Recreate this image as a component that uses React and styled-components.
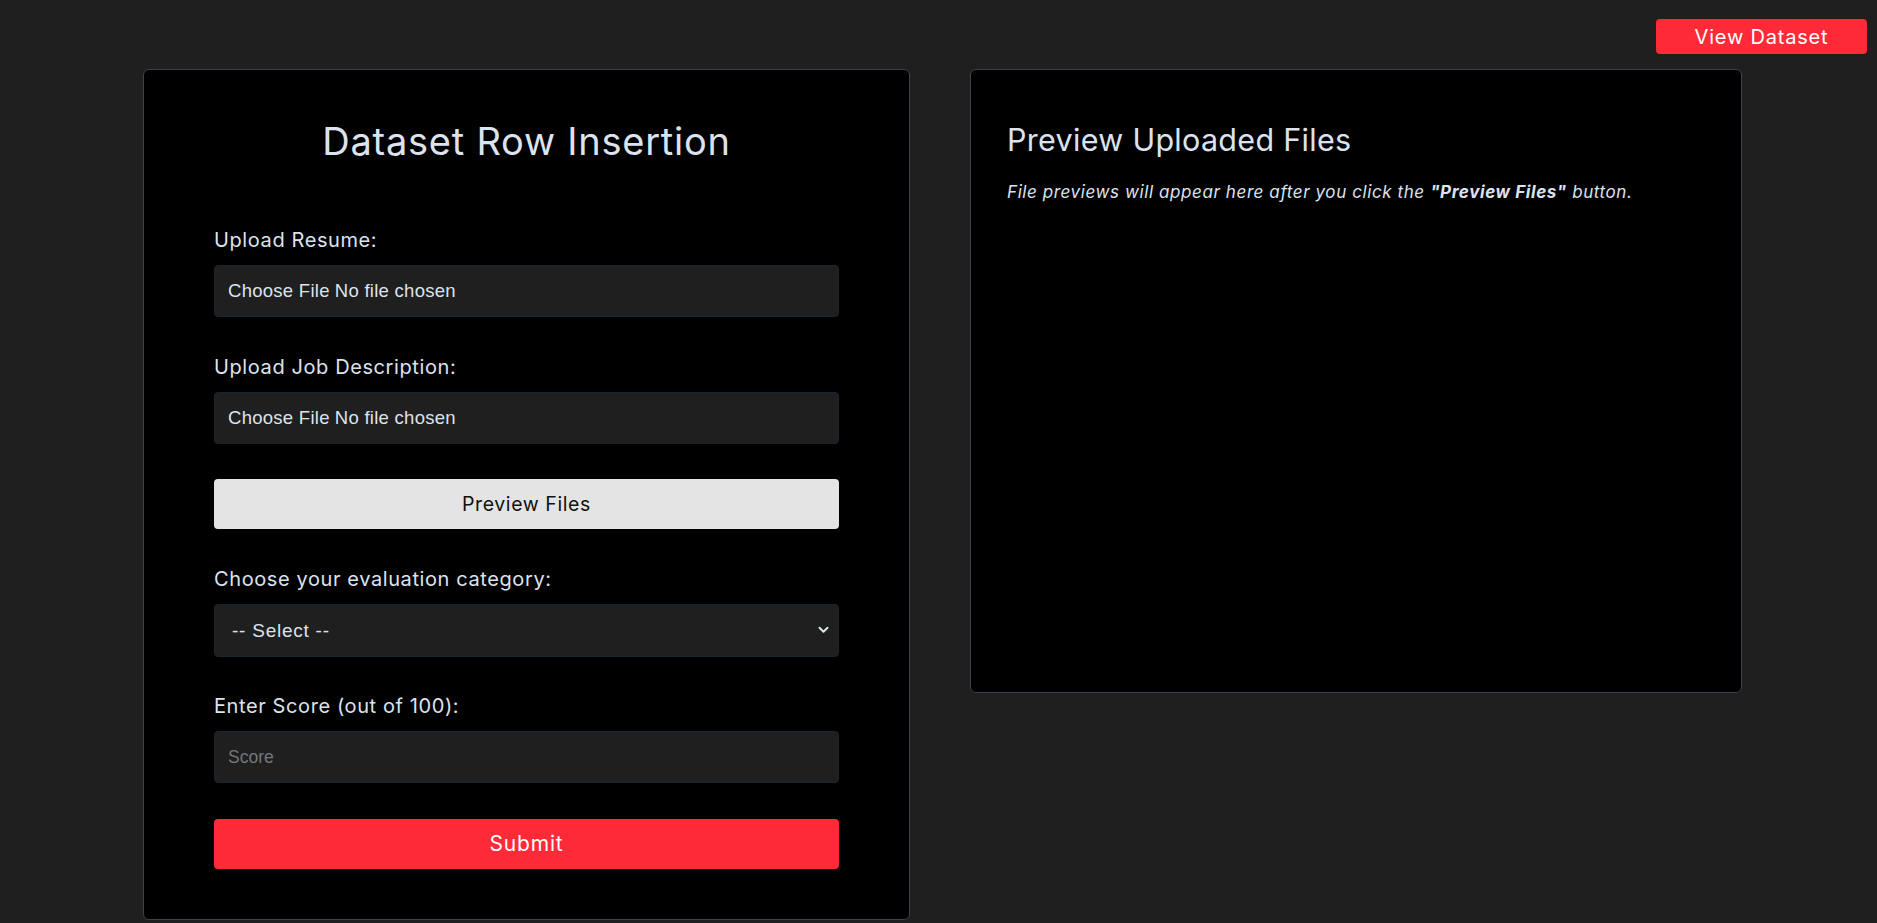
import React from "react";
import styled, { createGlobalStyle } from "styled-components";

const GlobalStyle = createGlobalStyle`
  * { box-sizing: border-box; }
  body {
    margin: 0;
    background: #1f1f1f;
    color: #dde3ee;
    font-family: "Inter", "Noto Sans", sans-serif;
  }
`;

const TopBar = styled.div`
  display: flex;
  justify-content: flex-end;
  padding: 19px 10px 0 0;
`;

const RedButton = styled.button`
  width: ${(p) => p.$width || "100%"};
  height: ${(p) => p.$height || "50px"};
  border: none;
  border-radius: 4px;
  background: #ff2a37;
  color: #ffffff;
  font-family: "Inter", "Noto Sans", sans-serif;
  font-size: ${(p) => p.$fontSize || "20px"};
  letter-spacing: 0.04em;
  cursor: pointer;
`;

const LightButton = styled.button`
  width: 100%;
  height: 50px;
  border: none;
  border-radius: 4px;
  background: #e4e4e4;
  color: #111111;
  font-family: "Inter", "Noto Sans", sans-serif;
  font-size: 19.5px;
  letter-spacing: 0.03em;
  cursor: pointer;
`;

const Main = styled.main`
  display: flex;
  align-items: flex-start;
  gap: 60px;
  padding: 15px 0 0 143px;
`;

const Card = styled.section`
  width: ${(p) => p.$width};
  min-height: ${(p) => p.$minHeight || "auto"};
  background: #000000;
  border: 1px solid #3d414a;
  border-radius: 6px;
  padding: ${(p) => p.$padding};
`;

const Title = styled.h2`
  margin: 0 0 63px;
  text-align: center;
  font-size: 38px;
  font-weight: 400;
  line-height: 43px;
  letter-spacing: 0.02em;
  color: #dde3ee;
`;

const Form = styled.form`
  display: flex;
  flex-direction: column;
  gap: 35.5px;
`;

const Field = styled.div`
  display: flex;
  flex-direction: column;
  gap: 11px;
`;

const Label = styled.label`
  font-size: 20px;
  line-height: 28px;
  letter-spacing: 0.03em;
  color: #dde3ee;
`;

const inputBase = `
  width: 100%;
  height: 52px;
  background: #1f1f1f;
  border: 1px solid #1c2433;
  border-radius: 4px;
  color: #dde3ee;
  font-family: "Liberation Sans", Arial, sans-serif;
  font-size: 17.5px;
  padding: 0 13px;
  outline: none;
`;

const FileInput = styled.input.attrs({ type: "file" })`
  ${inputBase}
  font-size: 18.5px;
  letter-spacing: 0.015em;
  line-height: 50px;

  &::file-selector-button {
    background: none;
    border: none;
    padding: 0;
    margin-right: 5px;
    color: #dde3ee;
    font: inherit;
    letter-spacing: inherit;
  }
`;

const TextInput = styled.input`
  ${inputBase}
  &::placeholder {
    color: #767676;
  }
`;

const SelectWrap = styled.div`
  position: relative;
`;

const Select = styled.select`
  ${inputBase}
  height: 53px;
  appearance: none;
  padding-left: 17px;
  font-size: 19px;
  letter-spacing: 0.04em;
`;

const Chevron = styled.svg`
  position: absolute;
  right: 10px;
  top: 22px;
  pointer-events: none;
`;

const PreviewHeading = styled.h3`
  margin: 0 0 22px;
  font-size: 30.5px;
  font-weight: 400;
  line-height: 36px;
  letter-spacing: 0.01em;
  color: #dde3ee;
`;

const Hint = styled.p`
  margin: 0;
  font-size: 17px;
  font-style: italic;
  line-height: 24px;
  letter-spacing: 0.035em;
  color: #dde3ee;

  strong {
    font-weight: 700;
  }
`;

export default function App() {
  return (
    <>
      <GlobalStyle />
      <TopBar>
        <RedButton $width="211px" $height="35px" $fontSize="20px">View Dataset</RedButton>
      </TopBar>
      <Main>
        <Card $width="767px" $padding="50px 70px 50px">
          <Title>Dataset Row Insertion</Title>
          <Form onSubmit={(e) => e.preventDefault()}>
            <Field>
              <Label>Upload Resume:</Label>
              <FileInput />
            </Field>
            <Field>
              <Label>Upload Job Description:</Label>
              <FileInput />
            </Field>
            <LightButton type="button">Preview Files</LightButton>
            <Field>
              <Label>Choose your evaluation category:</Label>
              <SelectWrap>
                <Select defaultValue="">
                  <option value="">-- Select --</option>
                </Select>
                <Chevron width="11" height="8" viewBox="0 0 11 8">
                  <path d="M1.5 1.8 L5.5 5.8 L9.5 1.8" fill="none" stroke="#dde3ee" strokeWidth="2" strokeLinecap="round" strokeLinejoin="round" />
                </Chevron>
              </SelectWrap>
            </Field>
            <Field>
              <Label>Enter Score (out of 100):</Label>
              <TextInput type="number" placeholder="Score" />
            </Field>
            <RedButton type="submit" $fontSize="21px">Submit</RedButton>
          </Form>
        </Card>
        <Card $width="772px" $minHeight="624px" $padding="52px 36px">
          <PreviewHeading>Preview Uploaded Files</PreviewHeading>
          <Hint>
            File previews will appear here after you click the <strong>"Preview Files"</strong> button.
          </Hint>
        </Card>
      </Main>
    </>
  );
}
